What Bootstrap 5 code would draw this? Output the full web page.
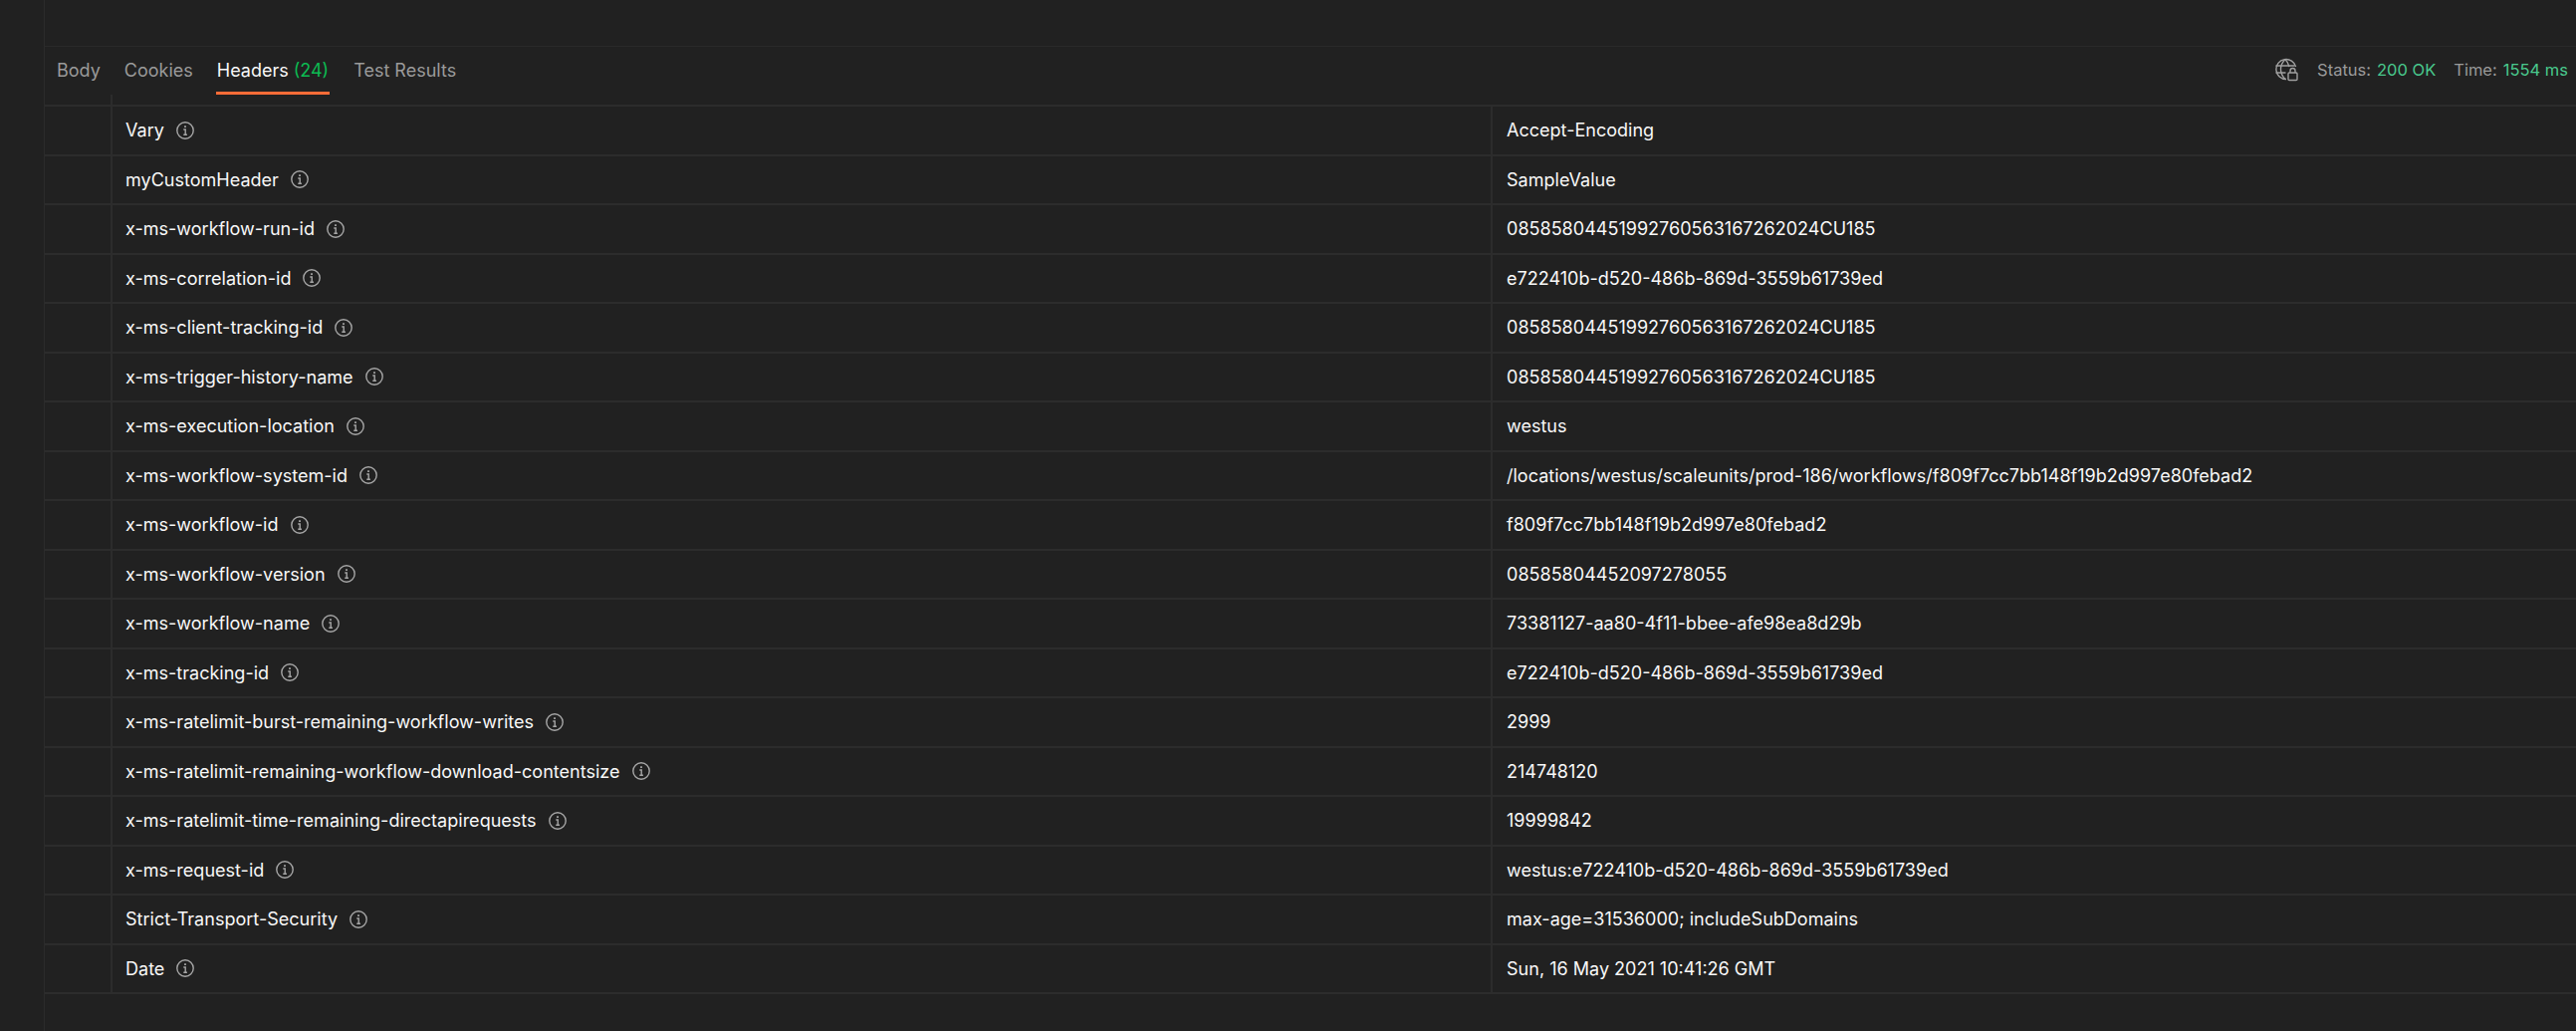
<!DOCTYPE html>
<html lang="en">
<head>
<meta charset="utf-8">
<title>Response headers</title>
<link href="https://cdn.jsdelivr.net/npm/bootstrap@5.3.0/dist/css/bootstrap.min.css" rel="stylesheet">
<style>
html,body{height:100%;background:#212121;overflow:hidden}
body{font-family:Inter,"Liberation Sans",sans-serif;font-size:18.04px;color:#f8f8f8}
.shell{margin-left:44px;height:100%;border-left:1px solid #2b2b2b}
.topgap{height:47px;border-bottom:1.5px solid #2a2a2a}
.tabbar{height:48px;padding-left:12px;padding-right:8px}
.tabitem{color:#9a9a9a;font-size:18px;line-height:24px;height:48px;padding-top:12px;margin-right:24px;display:block;text-decoration:none}
.tabitem.on{color:#f8f8f8;border-bottom:3px solid #ff6c37;padding:12px 1px 0;margin-left:-1px;margin-right:24px}
.tabcount{color:#0cbb52;margin-left:5px}
.metaline{font-size:16.5px;color:#9a9a9a;padding-top:11px}
.metaval{color:#49c98d;margin-left:6px}
.globe{margin-right:19px}
.metapair{margin-left:18px}
.gridline{height:10px}
.gridline>div{height:100%}
.hdrrow{height:49.5px;border-top:2px solid #2c2c2c}
.hdrrow:last-child{border-bottom:2px solid #2c2c2c;height:51.5px}
.spacer{width:68px;flex:none;border-right:2px solid #2c2c2c}
.namecell{width:1386px;flex:none;border-right:2px solid #2c2c2c;padding-left:13px}
.valcell{padding-left:14px;white-space:nowrap}
.infoglyph{margin-left:12px;flex:none}
</style>
</head>
<body>
<main class="shell d-flex flex-column">
  <div class="topgap"></div>
  <div class="tabbar d-flex align-items-start justify-content-between">
    <nav class="d-flex">
      <a class="tabitem" href="#">Body</a>
      <a class="tabitem" href="#">Cookies</a>
      <a class="tabitem on" href="#">Headers<span class="tabcount">(24)</span></a>
      <a class="tabitem" href="#">Test Results</a>
    </nav>
    <div class="metaline d-flex align-items-center">
      <svg class="globe" width="25" height="24" viewBox="0 0 25 24" fill="none" stroke="#a0a0a0" stroke-width="1.4">
        <path d="M13 21.5a10 10 0 1 1 9.6-12.5"/><path d="M12 1.5c-3 3-4.5 6.300-4.500 10s1.500 7 4.500 10"/><path d="M12 1.500c2 2 3.300 4.500 4 7.500"/><path d="M2.500 8h19M2.500 15h10"/>
        <rect x="15" y="15" width="9" height="7.500" rx="1"/><path d="M17 15v-2a2.500 2.500 0 0 1 5 0v2"/>
      </svg>
      <span>Status:<span class="metaval">200 OK</span></span>
      <span class="metapair">Time:<span class="metaval">1554 ms</span></span>
    </div>
  </div>
  <div class="gridline d-flex"><div class="spacer"></div></div>
  <section id="rows"></section>
</main>
<script>
const data=[["Vary","Accept-Encoding"],["myCustomHeader","SampleValue"],["x-ms-workflow-run-id","08585804451992760563167262024CU185"],["x-ms-correlation-id","e722410b-d520-486b-869d-3559b61739ed"],["x-ms-client-tracking-id","08585804451992760563167262024CU185"],["x-ms-trigger-history-name","08585804451992760563167262024CU185"],["x-ms-execution-location","westus"],["x-ms-workflow-system-id","/locations/westus/scaleunits/prod-186/workflows/f809f7cc7bb148f19b2d997e80febad2"],["x-ms-workflow-id","f809f7cc7bb148f19b2d997e80febad2"],["x-ms-workflow-version","08585804452097278055"],["x-ms-workflow-name","73381127-aa80-4f11-bbee-afe98ea8d29b"],["x-ms-tracking-id","e722410b-d520-486b-869d-3559b61739ed"],["x-ms-ratelimit-burst-remaining-workflow-writes","2999"],["x-ms-ratelimit-remaining-workflow-download-contentsize","214748120"],["x-ms-ratelimit-time-remaining-directapirequests","19999842"],["x-ms-request-id","westus:e722410b-d520-486b-869d-3559b61739ed"],["Strict-Transport-Security","max-age=31536000; includeSubDomains"],["Date","Sun, 16 May 2021 10:41:26 GMT"]];
const icon='<svg class="infoglyph" width="18" height="18" viewBox="0 0 18 18" fill="none" stroke="#a6a6a6"><circle cx="9" cy="9" r="8.200" stroke-width="1.400"/><path d="M9 4.300v1.800" stroke-width="1.800"/><path d="M7.300 8H9.200V13M7.300 13.300h3.600" stroke-width="1.400"/></svg>';
document.getElementById('rows').innerHTML=data.map(r=>`<div class="hdrrow d-flex"><div class="spacer"></div><div class="namecell d-flex align-items-center"><span>${r[0]}</span>${icon}</div><div class="valcell d-flex align-items-center"><span>${r[1]}</span></div></div>`).join('');
</script>
<script src="https://cdn.jsdelivr.net/npm/bootstrap@5.3.0/dist/js/bootstrap.bundle.min.js"></script>
</body>
</html>
